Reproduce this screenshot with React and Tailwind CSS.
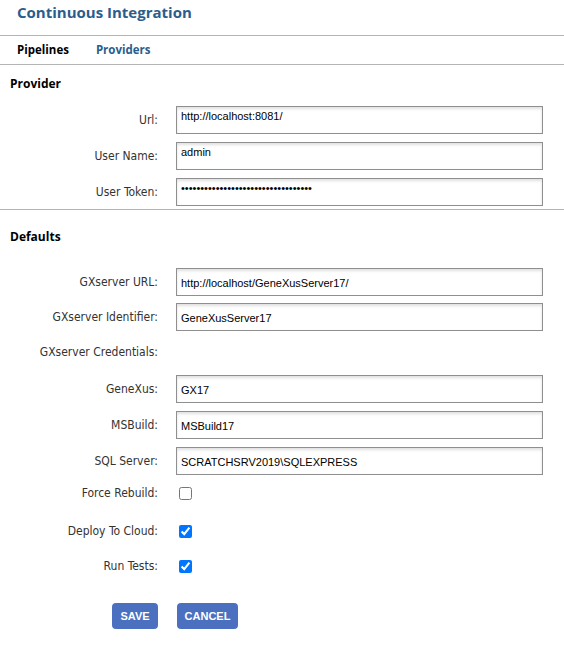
import React from 'react';

const labelCls = "w-[158px] text-right text-[12px] text-[#333] font-['DejaVu_Sans_Condensed','DejaVu_Sans',sans-serif]";

function Field({ label, value, type = 'text', top = false }) {
  return (
    <div className="flex items-center">
      <label className={labelCls}>{label}</label>
      <input
        type={type}
        defaultValue={value}
        className={`ml-[18px] h-[28px] w-[367px] border border-[#8f8f8f] bg-white pl-[4px] text-[11px] text-black font-['Liberation_Sans',Arial,sans-serif] shadow-[inset_0_2px_3px_rgba(0,0,0,0.12)] outline-none ${top ? 'pb-[8px]' : 'pt-[1px]'}`}
      />
    </div>
  );
}

function Check({ label, checked, className = '' }) {
  return (
    <div className={`flex items-center h-[20px] ${className}`}>
      <label className={labelCls}>{label}</label>
      <input type="checkbox" defaultChecked={checked} className="ml-[21px] h-[13px] w-[13px]" />
    </div>
  );
}

export default function App() {
  return (
    <div className="w-[564px] h-[670px] bg-white text-black">
      <div className="h-[36px] border-b border-[#b4b4b4] px-[17px] pt-[1px]">
        <h1 className="text-[15px] font-bold text-[#2b5d8c] font-['Open_Sans',sans-serif]">Continuous Integration</h1>
      </div>
      <div className="flex h-[29px] items-center gap-[27px] border-b border-[#b4b4b4] px-[17px] text-[11.5px] font-bold font-['Open_Sans',sans-serif]">
        <span className="text-black">Pipelines</span>
        <span className="text-[#2b5d8c]">Providers</span>
      </div>
      <h2 className="px-[10px] pt-[10px] text-[12px] font-bold font-['Open_Sans',sans-serif]">Provider</h2>
      <div className="mt-[13px] flex flex-col gap-[8px]">
        <Field label="Url:" value="http://localhost:8081/" top />
        <Field label="User Name:" value="admin" top />
        <Field label="User Token:" value="admin1234567890abcdefghijklmnopqrs" type="password" top />
      </div>
      <div className="mt-[3px] border-b border-[#b4b4b4]" />
      <h2 className="px-[10px] pt-[18px] text-[12px] font-bold font-['Open_Sans',sans-serif]">Defaults</h2>
      <div className="mt-[22px] flex flex-col gap-[7px]">
        <Field label="GXserver URL:" value="http://localhost/GeneXusServer17/" />
        <Field label="GXserver Identifier:" value="GeneXusServer17" />
        <div className="flex h-[28px] items-center">
          <label className={labelCls}>GXserver Credentials:</label>
        </div>
      </div>
      <div className="mt-[9px] flex flex-col gap-[8px]">
        <Field label="GeneXus:" value="GX17" />
        <Field label="MSBuild:" value="MSBuild17" />
        <Field label="SQL Server:" value="SCRATCHSRV2019\SQLEXPRESS" />
      </div>
      <Check label="Force Rebuild:" checked={false} className="mt-[8px]" />
      <Check label="Deploy To Cloud:" checked className="mt-[18px]" />
      <Check label="Run Tests:" checked className="mt-[15px]" />
      <div className="mt-[27px] flex gap-[19px] pl-[112px]">
        <button className="h-[26px] w-[46px] rounded-[4px] bg-[#4a70bf] text-[11px] font-bold text-white font-['Liberation_Sans',Arial,sans-serif]">SAVE</button>
        <button className="h-[26px] w-[61px] rounded-[4px] bg-[#4a70bf] text-[11px] font-bold text-white font-['Liberation_Sans',Arial,sans-serif]">CANCEL</button>
      </div>
    </div>
  );
}
